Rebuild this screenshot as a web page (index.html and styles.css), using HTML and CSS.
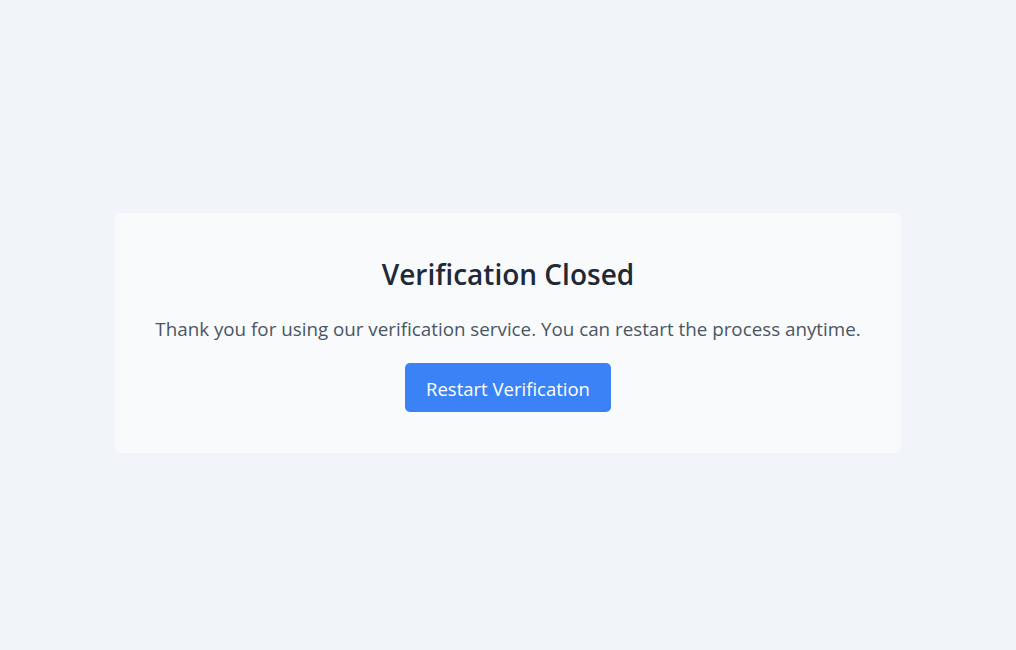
FILE: index.html
```html
<!DOCTYPE html>
<html lang="en">
<head>
<meta charset="utf-8">
<title>Verification Closed</title>
<link rel="stylesheet" href="styles.css">
</head>
<body>
<main class="page">
  <section class="card">
    <h1 class="card-title">Verification Closed</h1>
    <p class="card-text">Thank you for using our verification service. You can restart the process anytime.</p>
    <button class="btn-primary" type="button">Restart Verification</button>
  </section>
</main>
</body>
</html>
```
FILE: styles.css
```css
* { box-sizing: border-box; }
html, body { margin: 0; padding: 0; }
body {
  background: #f1f5f9;
  font-family: "Open Sans", "Noto Sans", sans-serif;
}
.page {
  min-height: 100vh;
  padding-top: 16px;
  display: flex;
  align-items: center;
  justify-content: center;
}
.card {
  width: 786px;
  background: #f8fafc;
  border-radius: 8px;
  padding: 42px 20px 41px;
  display: flex;
  flex-direction: column;
  align-items: center;
  text-align: center;
}
.card-title {
  margin: 0 0 22px;
  font-size: 28px;
  line-height: 38px;
  font-weight: 600;
  color: #1f2937;
}
.card-text {
  margin: 0 0 20px;
  font-size: 18.8px;
  line-height: 28px;
  color: #4b5563;
  white-space: nowrap;
}
.btn-primary {
  font-family: inherit;
  font-size: 18.5px;
  line-height: 27px;
  padding: 12px 21px 10px;
  border: 0;
  border-radius: 5px;
  background: #3b82f6;
  color: #ffffff;
  cursor: pointer;
}
```
